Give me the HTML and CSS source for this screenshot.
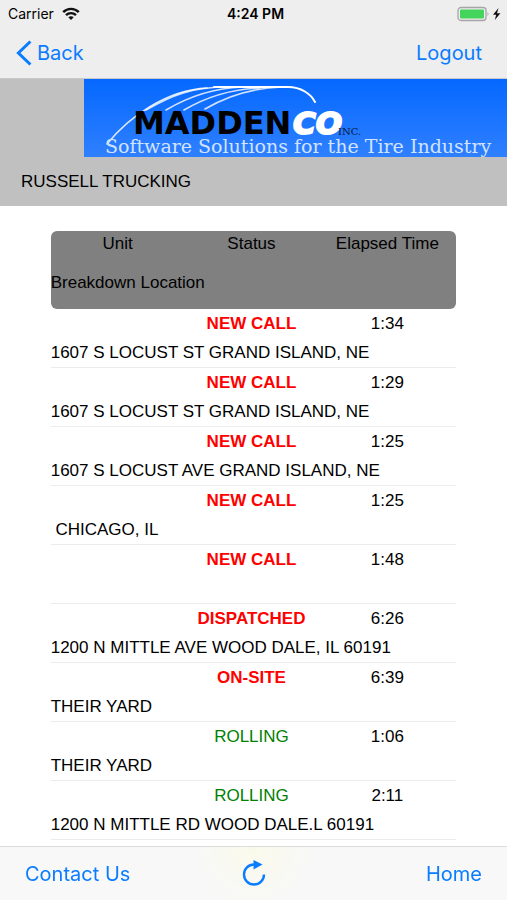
FILE: index.html
```
<!DOCTYPE html>
<html lang="en">
<head>
    <title>Russell Trucking</title>
    <meta charset="utf-8"/>
    <meta name="viewport" content="width=device-width, initial-scale=1">
    <link rel="stylesheet" href="styles.css">
</head>
<body>
<header class="top">
    <div class="status-bar">
        <div class="carrier">
            <span>Carrier</span>
            <svg width="18" height="14" viewBox="0 0 18 14" fill="none" stroke="#111" stroke-width="2.4">
                <path d="M1.2 5.2C5.6.8 12.4.8 16.8 5.2"/>
                <path d="M4 8.2C6.8 5.4 11.2 5.4 14 8.2"/>
                <path d="M9 13L6.3 10.3Q9 8 11.7 10.3Z" fill="#111" stroke="none"/>
            </svg>
        </div>
        <div class="clock">4:24 PM</div>
        <div class="battery">
            <svg width="46" height="16" viewBox="0 0 46 16">
                <rect x="1" y="1.5" width="28" height="13" rx="3" fill="#eee" stroke="#a5a5a5" stroke-width="1.3"/>
                <rect x="3" y="3.5" width="24" height="9" rx="1" fill="#43d45c"/>
                <path d="M30.5 6Q32.5 8 30.5 10Z" fill="#a5a5a5"/>
                <path d="M41.5 2L36 8.8H39.2L37.8 14L43.4 7.2H40Z" fill="#111"/>
            </svg>
        </div>
    </div>
    <nav class="nav-bar">
        <a href="#back" class="back">
            <svg width="16" height="26" viewBox="0 0 16 26" fill="none" stroke="#0a7cff" stroke-width="3">
                <path d="M14.4 1.5L2.4 13L14.4 24.5"/>
            </svg>
            Back
        </a>
        <a href="#logout">Logout</a>
    </nav>
</header>

<main>
    <section class="company">
        <div class="banner">
            <svg width="423" height="78" viewBox="0 0 423 78" role="img" aria-label="MaddenCo Inc.">
                <g fill="none" stroke="#fff" stroke-linecap="round">
                    <path d="M23 65C45 38 82 11 123 9" stroke-width="1.6" opacity=".85"/>
                    <path d="M62 31C88 16 108 8 144 8" stroke-width="1.6" opacity=".8"/>
                    <path d="M82 31C104 18 130 9 158 8" stroke-width="1.6" opacity=".8"/>
                    <path d="M100 31C122 18 148 10 176 9" stroke-width="1.6" opacity=".8"/>
                    <path d="M121 30C143 17 168 9 198 8" stroke-width="1.6" opacity=".8"/>
                    <path d="M130 8H204C217 8 227 15 231 23" stroke-width="2"/>
                </g>
                <text x="49" y="55" class="logo-madden">MADDEN</text>
                <text x="209" y="55" class="logo-co">CO</text>
                <text x="254" y="56" class="logo-inc">INC.</text>
                <text x="21" y="74" class="logo-tagline">Software Solutions for the Tire Industry</text>
            </svg>
        </div>
        <h1>RUSSELL TRUCKING</h1>
    </section>

    <table class="calls">
        <colgroup>
            <col class="col-unit">
            <col class="col-status">
            <col class="col-time">
        </colgroup>
        <thead>
        <tr>
            <th>Unit</th>
            <th>Status</th>
            <th>Elapsed Time</th>
        </tr>
        <tr>
            <th colspan="3" class="location">Breakdown Location</th>
        </tr>
        </thead>
        <tbody>
        <tr><td></td><td class="alert">NEW CALL</td><td>1:34</td></tr>
        <tr><td colspan="3" class="location">1607 S LOCUST ST GRAND ISLAND, NE</td></tr>
        <tr><td></td><td class="alert">NEW CALL</td><td>1:29</td></tr>
        <tr><td colspan="3" class="location">1607 S LOCUST ST GRAND ISLAND, NE</td></tr>
        <tr><td></td><td class="alert">NEW CALL</td><td>1:25</td></tr>
        <tr><td colspan="3" class="location">1607 S LOCUST AVE GRAND ISLAND, NE</td></tr>
        <tr><td></td><td class="alert">NEW CALL</td><td>1:25</td></tr>
        <tr><td colspan="3" class="location">&nbsp;CHICAGO, IL</td></tr>
        <tr><td></td><td class="alert">NEW CALL</td><td>1:48</td></tr>
        <tr><td colspan="3" class="location">&nbsp;</td></tr>
        <tr><td></td><td class="alert">DISPATCHED</td><td>6:26</td></tr>
        <tr><td colspan="3" class="location">1200 N MITTLE AVE WOOD DALE, IL 60191</td></tr>
        <tr><td></td><td class="alert">ON-SITE</td><td>6:39</td></tr>
        <tr><td colspan="3" class="location">THEIR YARD</td></tr>
        <tr><td></td><td class="rolling">ROLLING</td><td>1:06</td></tr>
        <tr><td colspan="3" class="location">THEIR YARD</td></tr>
        <tr><td></td><td class="rolling">ROLLING</td><td>2:11</td></tr>
        <tr><td colspan="3" class="location">1200 N MITTLE RD WOOD DALE.L 60191</td></tr>
        </tbody>
    </table>
</main>

<footer class="toolbar">
    <a href="#contact">Contact Us</a>
    <button type="button" aria-label="Refresh">
        <svg width="24" height="28" viewBox="0 0 24 28">
            <path d="M12 4.5A10 10 0 1 0 22 14.5" fill="none" stroke="#0a7cff" stroke-width="2.4"/>
            <path d="M11.5 0L20.5 4.5L11.5 9.5Z" fill="#0a7cff"/>
        </svg>
    </button>
    <a href="#home">Home</a>
</footer>
</body>
</html>
```
FILE: styles.css
```
body {
    margin: 0;
    background-color: #fff;
    color: #000;
    font-family: "Liberation Sans", Arial, sans-serif;
    font-size: 17px;
}

a {
    color: #0a7cff;
    text-decoration: none;
}

svg {
    display: block;
}

/* status bar and navigation */
.top {
    background-color: #eee;
    font-family: Inter, sans-serif;
}

.status-bar {
    display: grid;
    grid-template-columns: 1fr auto 1fr;
    align-items: center;
    height: 27px;
    padding: 0 4px 0 8px;
    font-size: 14px;
}

.carrier {
    display: flex;
    align-items: center;
    gap: 8px;
}

.clock {
    font-weight: 600;
}

.battery {
    justify-self: end;
}

.nav-bar {
    display: flex;
    justify-content: space-between;
    align-items: center;
    height: 51px;
    padding: 0 25px 0 16px;
    border-bottom: 1px solid #c8c8cc;
    font-size: 20px;
}

.back {
    display: flex;
    align-items: center;
    gap: 5px;
}

/* company block */
.company {
    background-color: #c0c0c0;
}

.banner {
    margin-left: 84px;
    background: linear-gradient(#0568ff, #2f80ff);
}

.logo-madden {
    font: bold 32px "DejaVu Sans", sans-serif;
    fill: #000;
}

.logo-co {
    font: italic bold 31px "DejaVu Sans", sans-serif;
    fill: #fff;
    stroke: #fff;
    stroke-width: 2px;
}

.logo-inc {
    font: 10px "DejaVu Serif", serif;
    fill: #0a1a40;
}

.logo-tagline {
    font: 19px "DejaVu Serif", serif;
    fill: #d2e3ff;
}

h1 {
    margin: 0;
    padding: 1px 0 0 21px;
    font-size: 17px;
    font-weight: normal;
    line-height: 48px;
}

/* call list */
.calls {
    width: 80%;
    margin: 25px auto 60px;
    border-spacing: 0;
    table-layout: fixed;
}

.col-unit,
.col-status {
    width: 33%;
}

.col-time {
    width: 34%;
}

.calls th,
.calls td {
    padding: 0;
    text-align: center;
}

.calls th {
    height: 39px;
    background-color: #808080;
    font-weight: normal;
    line-height: 26px;
    vertical-align: top;
}

.calls tr:first-child th:first-child {
    border-top-left-radius: 6px;
}

.calls tr:first-child th:last-child {
    border-top-right-radius: 6px;
}

.calls th.location {
    border-radius: 0 0 6px 6px;
}

.calls td {
    height: 30px;
    line-height: 30px;
}

.calls .location {
    text-align: left;
}

.calls td.location {
    height: 28px;
    line-height: 28px;
    border-bottom: 1px solid #ececec;
}

.calls .alert {
    color: #f00;
    font-weight: bold;
}

.calls .rolling {
    color: #008000;
}

/* bottom toolbar */
.toolbar {
    position: fixed;
    left: 0;
    right: 0;
    bottom: 0;
    display: grid;
    grid-template-columns: 1fr auto 1fr;
    align-items: center;
    height: 53px;
    padding: 0 25px;
    border-top: 1px solid #dcdcdc;
    background: radial-gradient(circle at 50% 0, #fafaeb, #f8f8f8 60px);
    font-family: Inter, sans-serif;
    font-size: 20px;
}

.toolbar button {
    padding: 0;
    border: none;
    background: none;
    cursor: pointer;
}

.toolbar a:last-child {
    justify-self: end;
}
```
